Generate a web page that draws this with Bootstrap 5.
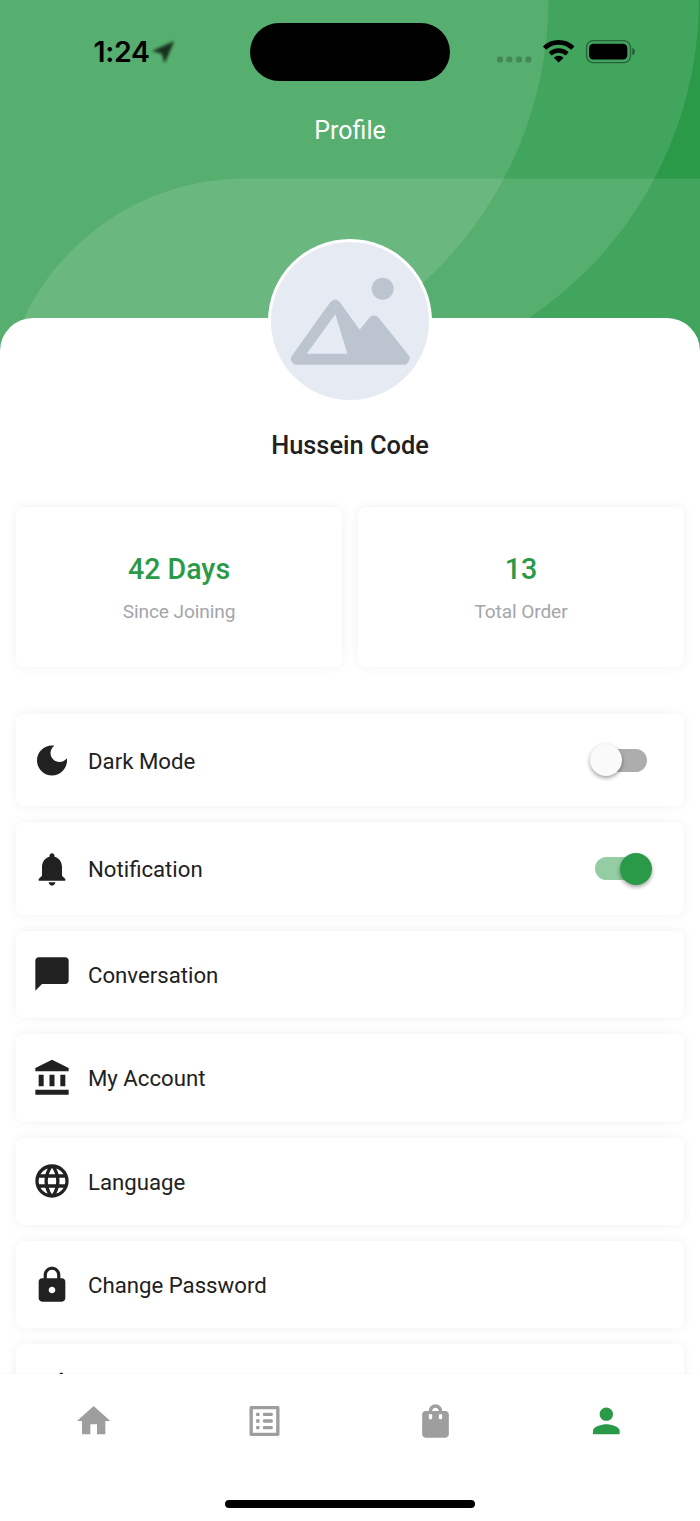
<!DOCTYPE html>
<html lang="en">
<head>
<meta charset="utf-8">
<meta name="viewport" content="width=device-width, initial-scale=1">
<title>Profile</title>
<link href="https://cdn.jsdelivr.net/npm/bootstrap@5.3.0/dist/css/bootstrap.min.css" rel="stylesheet">
<style>
  :root { --brand: #2a9a49; --ink: #212121; }
  body { font-family: Roboto, "Liberation Sans", sans-serif; color: var(--ink); background: #fff; }
  svg { display: block; flex: none; }
  .phone { width: 700px; height: 1521px; }
  .hero { height: 318.4px; background: var(--brand); }
  .hero-shapes { position: absolute; top: 0; left: 0; }
  .status { display: grid; grid-template-columns: 250px 200px 250px; height: 80.6px; padding-top: 22.6px; }
  .island { background: #000; border-radius: 29px; }
  .clock { font: 600 28.5px/58px Inter, sans-serif; color: #000; letter-spacing: -.3px; padding-left: 93.5px; }
  .locator { margin-top: 16px; }
  .locator path { filter: blur(4px); }
  .page-title { font-size: 25px; line-height: 30px; margin-top: 35px; color: #fff; }
  .sheet { border-radius: 33px 33px 0 0; background: #fff; min-height: 0; }
  .avatar { width: 164px; height: 164px; margin: -79.4px 0 1px 268px; border-radius: 50%; background: #fff; padding: 3px; }
  .avatar svg { border-radius: 50%; background: #e6eaf3; }
  .user-name { font-size: 25.4px; font-weight: 500; line-height: 30px; margin-top: 26px; }
  .panel { background: #fff; border-radius: 8px; box-shadow: 0 0 12px rgba(0,0,0,.06); }
  .stats { gap: 16px; padding: 0 16px; margin-top: 47px; }
  .stats .panel { height: 159.5px; padding-top: 45px; }
  .stat-value { font-size: 28.6px; font-weight: 500; line-height: 34px; color: var(--brand); }
  .stat-label { font-size: 19.1px; line-height: 24px; margin-top: 14px; color: #a3a6aa; letter-spacing: -.1px; }
  .menu-list { gap: 16px; padding: 0 16px; margin-top: 47.5px; }
  .menu-item { height: 87.4px; padding: 0 32px 0 16px; gap: 16px; font-size: 22.2px; flex: none; }
  .menu-item.has-toggle { height: 92.4px; }
  .menu-label { padding-top: 2px; }
  .toggle { width: 62px; height: 32px; padding: 0 5px; }
  .toggle-track { height: 23px; width: 52px; border-radius: 12px; background: #adadad; }
  .toggle-thumb { position: absolute; left: 0; top: 0; width: 32px; height: 32px; border-radius: 50%; background: #fafafa; box-shadow: 0 2px 4px rgba(0,0,0,.38); }
  .toggle.is-on .toggle-track { background: #94cca4; }
  .toggle.is-on .toggle-thumb { left: 30px; background: var(--brand); }
  .tabbar { height: 147px; padding: 27px 8px 0; background: #fff; color: #9e9e9e; box-shadow: 0 -1px 2px rgba(0,0,0,.02); z-index: 2; }
  .home-bar { width: 250px; height: 8px; border-radius: 4px; background: #000; margin-top: 59px; }
</style>
</head>
<body>
<div class="phone d-flex flex-column overflow-hidden position-relative">
  <header class="hero position-relative flex-shrink-0">
    <svg class="hero-shapes" width="700" height="370" viewBox="0 0 700 370">
      <rect y="300" width="700" height="70" fill="#2a9a49"/>
      <g fill="#fff" fill-opacity=".115">
        <path d="M-10-10H699V-1A384 384 0 0 1 315 383H-10Z"/>
        <path d="M-10-10H548.500V-1A384 384 0 0 1 164.500 383H-10Z"/>
        <path d="M0 424A245 245 0 0 1 245 178.500H700V424Z"/>
      </g>
    </svg>
    <div class="status position-relative">
      <div class="d-flex">
        <span class="clock">1:24</span>
        <svg class="locator" width="26" height="26" viewBox="451 117 78 78"><path d="M457 153 524 123 495 190 486 161Z" fill="#000" opacity=".72"/></svg>
      </div>
      <div class="island"></div>
      <svg width="250" height="58" viewBox="300 68.500 750 174">
        <g fill="#000" fill-opacity=".22"><rect x="441" y="169" width="18" height="18" rx="6"/><rect x="469" y="169" width="18" height="18" rx="6"/><rect x="498" y="169" width="18" height="18" rx="6"/><rect x="526" y="169" width="18" height="18" rx="6"/></g>
        <g fill="none" stroke="#000"><path d="M583.500 144A60.500 60.500 0 0 1 668.500 144" stroke-width="14"/><path d="M600.500 161A37.500 37.500 0 0 1 651.500 161" stroke-width="13"/></g>
        <path d="M626 187 611 173A22 22 0 0 1 641 173Z"/>
        <rect x="709.500" y="121.500" width="132" height="66" rx="20" fill="none" stroke="#000" stroke-opacity=".4" stroke-width="4"/>
        <rect x="717" y="131" width="115" height="47" rx="13"/>
        <path d="M847 143Q855 146 855 154T847 165Z" fill-opacity=".45"/>
      </svg>
    </div>
    <h1 class="page-title position-relative text-center fw-normal mb-0">Profile</h1>
  </header>

  <main class="sheet position-relative flex-grow-1 d-flex flex-column">
    <div class="avatar flex-shrink-0">
      <svg width="158" height="158" viewBox="63 37 474 474">
        <g fill="#bcc4cf"><circle cx="398" cy="177" r="33"/>
        <path fill-rule="evenodd" d="M137 405Q130 405 124 395 119 387 126 378L241 217Q255 202 269 217L329 300 358 264Q372 251 386 264L476 377Q482 385 477 394 471 405 465 405ZM256 254 170 372H292Z"/></g>
      </svg>
    </div>
    <h2 class="user-name text-center mb-0">Hussein Code</h2>

    <section class="stats d-flex text-center">
      <div class="panel flex-fill w-50"><div class="stat-value">42 Days</div><div class="stat-label">Since Joining</div></div>
      <div class="panel flex-fill w-50"><div class="stat-value">13</div><div class="stat-label">Total Order</div></div>
    </section>

    <section class="menu-list d-flex flex-column">
      <div class="panel menu-item has-toggle d-flex align-items-center">
        <svg width="40" height="40" viewBox="0 -.3 24 24" fill="currentColor"><path d="M12 3c-4.970 0-9 4.030-9 9s4.030 9 9 9 9-4.030 9-9c0-.460-.040-.920-.100-1.360-.980 1.370-2.580 2.260-4.400 2.260-2.980 0-5.400-2.420-5.400-5.400 0-1.810.890-3.420 2.260-4.400C12.920 3.040 12.460 3 12 3z"/></svg>
        <span class="menu-label">Dark Mode</span>
        <span class="toggle ms-auto position-relative d-flex align-items-center" role="switch" aria-checked="false"><span class="toggle-track"></span><span class="toggle-thumb"></span></span>
      </div>
      <div class="panel menu-item has-toggle d-flex align-items-center">
        <svg width="40" height="40" viewBox="0 0 24 24" fill="currentColor"><path d="M12 22c1.100 0 2-.900 2-2h-4c0 1.100.890 2 2 2zm6-6v-5c0-3.070-1.640-5.640-4.500-6.320V4c0-.830-.670-1.500-1.500-1.500s-1.500.670-1.500 1.500v.680C7.630 5.360 6 7.920 6 11v5l-2 2v1h16v-1l-2-2z"/></svg>
        <span class="menu-label">Notification</span>
        <span class="toggle is-on ms-auto position-relative d-flex align-items-center" role="switch" aria-checked="true"><span class="toggle-track"></span><span class="toggle-thumb"></span></span>
      </div>
      <div class="panel menu-item d-flex align-items-center">
        <svg width="40" height="40" viewBox="0 0 24 24" fill="currentColor"><path d="M20 2H4c-1.100 0-2 .900-2 2v18l4-4h14c1.100 0 2-.900 2-2V4c0-1.100-.900-2-2-2z"/></svg>
        <span class="menu-label">Conversation</span>
      </div>
      <div class="panel menu-item d-flex align-items-center">
        <svg width="40" height="40" viewBox="0 0 24 24" fill="currentColor"><path d="M4 10h3v7H4zM10.500 10h3v7h-3zM17 10h3v7h-3zM2 19h20v3H2zM12 1 2 6v2h20V6z"/></svg>
        <span class="menu-label">My Account</span>
      </div>
      <div class="panel menu-item d-flex align-items-center">
        <svg width="40" height="40" viewBox="0 0 24 24" fill="currentColor"><path d="M11.990 2C6.470 2 2 6.480 2 12s4.470 10 9.990 10C17.520 22 22 17.520 22 12S17.520 2 11.990 2zm6.930 6h-2.950c-.320-1.250-.780-2.450-1.380-3.560 1.840.630 3.370 1.910 4.330 3.560zM12 4.040c.830 1.200 1.480 2.530 1.910 3.960h-3.820c.430-1.430 1.080-2.760 1.910-3.960zM4.260 14C4.100 13.360 4 12.690 4 12s.100-1.360.260-2h3.380c-.080.660-.140 1.320-.140 2s.060 1.340.140 2H4.260zm.820 2h2.950c.320 1.250.780 2.450 1.380 3.560-1.840-.630-3.370-1.900-4.330-3.560zm2.950-8H5.080c.960-1.660 2.490-2.930 4.330-3.560C8.810 5.550 8.350 6.750 8.030 8zM12 19.960c-.830-1.200-1.480-2.530-1.910-3.960h3.820c-.430 1.430-1.080 2.760-1.910 3.960zM14.340 14H9.660c-.090-.660-.160-1.320-.160-2s.070-1.350.160-2h4.680c.090.650.160 1.320.160 2s-.070 1.340-.160 2zm.250 5.560c.600-1.110 1.060-2.310 1.380-3.560h2.950c-.960 1.650-2.490 2.930-4.330 3.560zM16.360 14c.080-.660.140-1.320.140-2s-.060-1.340-.140-2h3.380c.160.640.260 1.310.260 2s-.100 1.360-.260 2h-3.380z"/></svg>
        <span class="menu-label">Language</span>
      </div>
      <div class="panel menu-item d-flex align-items-center">
        <svg width="40" height="40" viewBox="0 0 24 24" fill="currentColor"><path d="M18 8h-1V6c0-2.760-2.240-5-5-5S7 3.240 7 6v2H6c-1.100 0-2 .900-2 2v10c0 1.100.900 2 2 2h12c1.100 0 2-.900 2-2V10c0-1.100-.900-2-2-2zm-6 9c-1.100 0-2-.900-2-2s.900-2 2-2 2 .900 2 2-.900 2-2 2zm3.100-9H8.900V6c0-1.710 1.390-3.100 3.100-3.100 1.710 0 3.100 1.390 3.100 3.100v2z"/></svg>
        <span class="menu-label">Change Password</span>
      </div>
      <div class="panel menu-item d-flex align-items-center">
        <svg width="40" height="40" viewBox="0 0 24 24" fill="currentColor"><path d="M17 2.900h1.200L19.500 4.500V22H5V5h10.500z"/></svg>
      </div>
    </section>
  </main>

  <nav class="tabbar position-absolute bottom-0 start-0 w-100">
    <div class="d-flex">
      <span class="flex-fill d-flex justify-content-center"><svg width="40" height="40" viewBox=".2 0 24 24" fill="currentColor"><path d="M10 20v-6h4v6h5v-8h3L12 3 2 12h3v8z"/></svg></span>
      <span class="flex-fill d-flex justify-content-center"><svg width="40" height="40" viewBox=".3 0 24 24" fill="currentColor"><path d="M19 5v14H5V5h14m1.100-2H3.900c-.500 0-.900.400-.900.900v16.200c0 .400.400.900.900.900h16.200c.400 0 .900-.500.900-.900V3.900c0-.500-.500-.900-.900-.900z"/><path d="M7 7h2v2H7zM7 11h2v2H7zM7 15h2v2H7z"/><rect x="11" y="7" width="6" height="2" rx=".8"/><rect x="11" y="11" width="6" height="2" rx=".8"/><rect x="11" y="15" width="6" height="2" rx=".8"/></svg></span>
      <span class="flex-fill d-flex justify-content-center"><svg width="40" height="40" viewBox=".3 0 24 24" fill="currentColor"><path d="M18 6h-2c0-2.210-1.790-4-4-4S8 3.790 8 6H6c-1.100 0-2 .900-2 2v12c0 1.100.900 2 2 2h12c1.100 0 2-.900 2-2V8c0-1.100-.900-2-2-2zm-8 4c0 .550-.450 1-1 1s-1-.450-1-1V8h2v2zm2-6c1.100 0 2 .900 2 2h-4c0-1.100.900-2 2-2zm4 6c0 .550-.450 1-1 1s-1-.450-1-1V8h2v2z"/></svg></span>
      <span class="flex-fill d-flex justify-content-center"><svg width="40" height="40" viewBox=".4 .1 24 24" fill="#2a9a49"><path d="M12 12c2.210 0 4-1.790 4-4s-1.790-4-4-4-4 1.790-4 4 1.790 4 4 4zm0 2c-2.670 0-8 1.340-8 4v2h16v-2c0-2.660-5.330-4-8-4z"/></svg></span>
    </div>
    <div class="home-bar mx-auto"></div>
  </nav>
</div>
<script src="https://cdn.jsdelivr.net/npm/bootstrap@5.3.0/dist/js/bootstrap.bundle.min.js"></script>
</body>
</html>
